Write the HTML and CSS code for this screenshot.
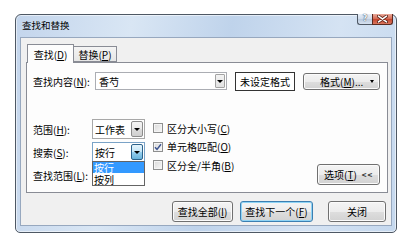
FILE: index.html
```html
<!DOCTYPE html>
<html lang="zh-CN">
<head>
<meta charset="utf-8">
<title>查找和替换</title>
<link rel="stylesheet" href="styles.css">
</head>
<body>
<div class="window">
  <div class="titlebar">
    <span class="title">查找和替换</span>
    <div class="caption">
      <div class="cbtn help"><span class="qmark">?</span></div>
      <div class="cbtn close">
        <svg width="11" height="8" viewBox="0 0 11 8">
          <path d="M1.5 1.2 L9.5 6.8 M9.5 1.2 L1.5 6.8" stroke="#5b2217" stroke-width="3.2" stroke-linecap="round" fill="none"/>
          <path d="M1.5 1.2 L9.5 6.8 M9.5 1.2 L1.5 6.8" stroke="#ffffff" stroke-width="1.6" stroke-linecap="round" fill="none"/>
        </svg>
      </div>
    </div>
  </div>
  <div class="client">
    <div class="tabs">
      <div class="tab active">查找(<u>D</u>)</div>
      <div class="tab inactive">替换(<u>P</u>)</div>
    </div>
    <div class="panel">
      <div class="row1">
        <span class="lbl1">查找内容(<u>N</u>):</span>
        <div class="combo">
          <span class="combo-text">香芍</span>
          <span class="combo-arrow"><i class="tri"></i></span>
        </div>
        <div class="fmtbox">未设定格式</div>
        <div class="btn fmtbtn"><span class="fmt-label">格式(<u>M</u>)...</span><i class="tri small"></i></div>
      </div>
      <div class="lower">
        <div class="fields">
          <span class="lbl">范围(<u>H</u>):</span>
          <div class="select"><span class="sel-text">工作表</span><span class="sel-arrow"><i class="tri"></i></span></div>
          <span class="lbl">搜索(<u>S</u>):</span>
          <div class="select open">
            <span class="sel-text">按行</span><span class="sel-arrow pressed"><i class="tri"></i></span>
            <div class="dropdown">
              <div class="opt selected"><span class="opt-text">按行</span></div>
              <div class="opt"><span class="opt-text">按列</span></div>
            </div>
          </div>
          <span class="lbl">查找范围(<u>L</u>):</span>
          <div class="select"><span class="sel-text"></span><span class="sel-arrow"><i class="tri"></i></span></div>
        </div>
        <div class="checks">
          <div class="check"><span class="box"></span><span>区分大小写(<u>C</u>)</span></div>
          <div class="check"><span class="box"><svg width="8" height="8" viewBox="0 0 8 8"><path d="M1 4.2 L3 6.4 L7 1.2" stroke="#3d5591" stroke-width="1.5" fill="none"/></svg></span><span>单元格匹配(<u>O</u>)</span></div>
          <div class="check"><span class="box"></span><span>区分全/半角(<u>B</u>)</span></div>
        </div>
        <div class="btn options"><span>选项(<u>T</u>)</span><span class="chev">&lt;&lt;</span></div>
      </div>
    </div>
    <div class="actions">
      <div class="btn act w1">查找全部(<u>I</u>)</div>
      <div class="btn act w2 default">查找下一个(<u>F</u>)</div>
      <div class="btn act w3">关闭</div>
    </div>
  </div>
</div>
</body>
</html>
```
FILE: styles.css
```css
* { box-sizing: border-box; }
body {
  margin: 0;
  background: #ffffff;
  font-family: "Noto Sans CJK SC", "Microsoft YaHei", sans-serif;
  font-size: 10px;
  color: #000;
}
u { text-decoration: underline; text-underline-offset: 1px; }

.window {
  margin: 14px 0 0 15px;
  width: 382px;
  height: 219px;
  border: 1px solid #4e5864;
  border-radius: 6px 6px 5px 5px;
  background: linear-gradient(100deg, #c3d5ec 0%, #d9e6f4 28%, #bfd3eb 52%, #d5e3f3 78%, #c5d8ee 100%);
  box-shadow: inset 0 0 0 1px rgba(255,255,255,0.55);
  padding: 0 4px 6px 4px;
  display: flex;
  flex-direction: column;
}
.titlebar {
  height: 22px;
  display: flex;
  align-items: center;
  padding-left: 2px;
}
.title { flex: 1; font-size: 9.5px; line-height: 1; }
.caption {
  align-self: flex-start;
  margin-top: -1px;
  margin-right: -1px;
  display: flex;
}
.cbtn {
  height: 11px;
  display: flex;
  align-items: center;
  justify-content: center;
  border: 1px solid #4e5864;
  border-top: none;
}
.help {
  width: 15px;
  border-right: none;
  border-radius: 0 0 0 3px;
  background: linear-gradient(#e8eff8, #cfdbea 50%, #b9c9dd 51%, #d6e1ef);
}
.qmark {
  font-family: "DejaVu Sans", sans-serif;
  font-size: 8px;
  font-weight: bold;
  line-height: 1;
  color: #f4f7fb;
  text-shadow: 0 0 1px #3e4d60, 0 0 1px #3e4d60;
}
.close {
  width: 21px;
  border-color: #5a2a20;
  border-radius: 0 0 3px 0;
  background: linear-gradient(#e9ab9c, #d5664f 50%, #c4432c 51%, #d9775f);
}
.close svg { display: block; }

.client {
  flex: 1;
  border: 1px solid #97a8bf;
  background: #f0f0f0;
  padding: 6px 3px 0 5px;
}
.tabs {
  height: 18px;
  display: flex;
  align-items: flex-start;
  padding-left: 1px;
}
.tab {
  display: flex;
  align-items: center;
  justify-content: center;
  border: 1px solid #898c95;
}
.tab.active {
  position: relative;
  z-index: 1;
  width: 47px;
  height: 19px;
  border-bottom: none;
  background: #fdfdfd;
}
.tab.inactive {
  width: 43px;
  height: 16px;
  margin-top: 2px;
  border-left: none;
  background: linear-gradient(#f4f4f4, #e6e6e6);
}
.panel {
  width: 362px;
  height: 131px;
  border: 1px solid #898c95;
  background: #fdfdfd;
  padding: 9px 7px 0 6px;
}
.row1 {
  height: 18px;
  display: flex;
  align-items: center;
}
.lbl1 { width: 62px; }
.combo {
  width: 132px;
  height: 18px;
  border: 1px solid #abadb3;
  background: #fff;
  display: flex;
  align-items: center;
  padding-left: 3px;
}
.combo-text { flex: 1; }
.combo-arrow {
  width: 10px;
  height: 14px;
  margin-right: 1px;
  border: 1px solid #a3a3a3;
  border-radius: 1px;
  background: linear-gradient(#f3f3f3, #e2e2e2);
  display: flex;
  align-items: center;
  justify-content: center;
}
.tri {
  display: block;
  width: 0;
  height: 0;
  border-left: 3px solid transparent;
  border-right: 3px solid transparent;
  border-top: 3px solid #000;
}
.tri.small { border-left-width: 2px; border-right-width: 2px; border-top-width: 3px; }
.fmtbox {
  margin-left: 8px;
  width: 60px;
  height: 19px;
  border: 1px solid #333;
  background: #fff;
  display: flex;
  align-items: center;
  justify-content: center;
}
.btn {
  border: 1px solid #707070;
  border-radius: 3px;
  background: linear-gradient(#f4f4f4, #ececec 50%, #dedede 51%, #d2d2d2);
  box-shadow: inset 0 0 0 1px #fbfbfb;
  display: flex;
  align-items: center;
  justify-content: center;
}
.fmtbtn {
  margin-left: 8px;
  width: 77px;
  height: 17px;
  justify-content: flex-start;
  padding: 0 5px 0 16px;
}
.fmt-label { flex: 1; }

.lower {
  margin-top: 29px;
  display: flex;
  align-items: flex-start;
}
.fields {
  display: grid;
  grid-template-columns: 59px 53px;
  grid-auto-rows: 20px;
  row-gap: 3px;
  align-items: center;
}
.select {
  position: relative;
  height: 20px;
  border: 1px solid #a8a8a8;
  background: #fff;
  display: flex;
  align-items: center;
  padding-left: 2px;
}
.select.open { border-color: #7aa3c7; }
.sel-text { flex: 1; }
.sel-arrow {
  width: 12px;
  height: 16px;
  margin-right: 1px;
  border: 1px solid #8c8c8c;
  border-radius: 2px;
  background: linear-gradient(#f4f4f4, #e9e9e9 50%, #dcdcdc 51%, #cfcfcf);
  display: flex;
  align-items: center;
  justify-content: center;
}
.sel-arrow.pressed {
  border-color: #2c628b;
  background: linear-gradient(#e5f4fc, #c4e5f6 50%, #98d1ef 51%, #68b3db);
}
.dropdown {
  position: absolute;
  z-index: 2;
  top: 18px;
  left: -1px;
  width: 53px;
  height: 25px;
  border: 1px solid #646464;
  background: #fff;
}
.opt {
  height: 11px;
  padding-left: 1px;
  display: flex;
  align-items: center;
}
.opt + .opt { height: 12px; }
.opt-text { line-height: 11px; }
.opt.selected { background: #3399ff; color: #fff; }

.checks {
  margin-left: 8px;
  display: flex;
  flex-direction: column;
}
.check {
  height: 18.5px;
  display: flex;
  align-items: center;
}
.box {
  width: 10px;
  height: 10px;
  margin-right: 4px;
  border: 1px solid #8e8f8f;
  background: linear-gradient(135deg, #d9d9d9, #f7f7f7);
  box-shadow: inset 0 0 0 1px #f4f4f4;
  display: flex;
  align-items: center;
  justify-content: center;
}
.box svg { display: block; }
.options {
  margin-left: auto;
  margin-top: 45px;
  width: 63px;
  height: 21px;
  justify-content: flex-start;
  padding-left: 6px;
}
.chev {
  margin-left: 5px;
  font-size: 8px;
  font-weight: bold;
  letter-spacing: 1px;
  color: #333;
}

.actions {
  margin-top: 8px;
  display: flex;
  justify-content: flex-end;
  padding-right: 2px;
}
.act { height: 21px; }
.w1 { width: 61px; }
.w2 { width: 73px; margin-left: 7px; }
.w3 { width: 58px; margin-left: 15px; }
.default {
  border-color: #3c7fb1;
  box-shadow: inset 0 0 0 1px #8fd4f5;
}
```
